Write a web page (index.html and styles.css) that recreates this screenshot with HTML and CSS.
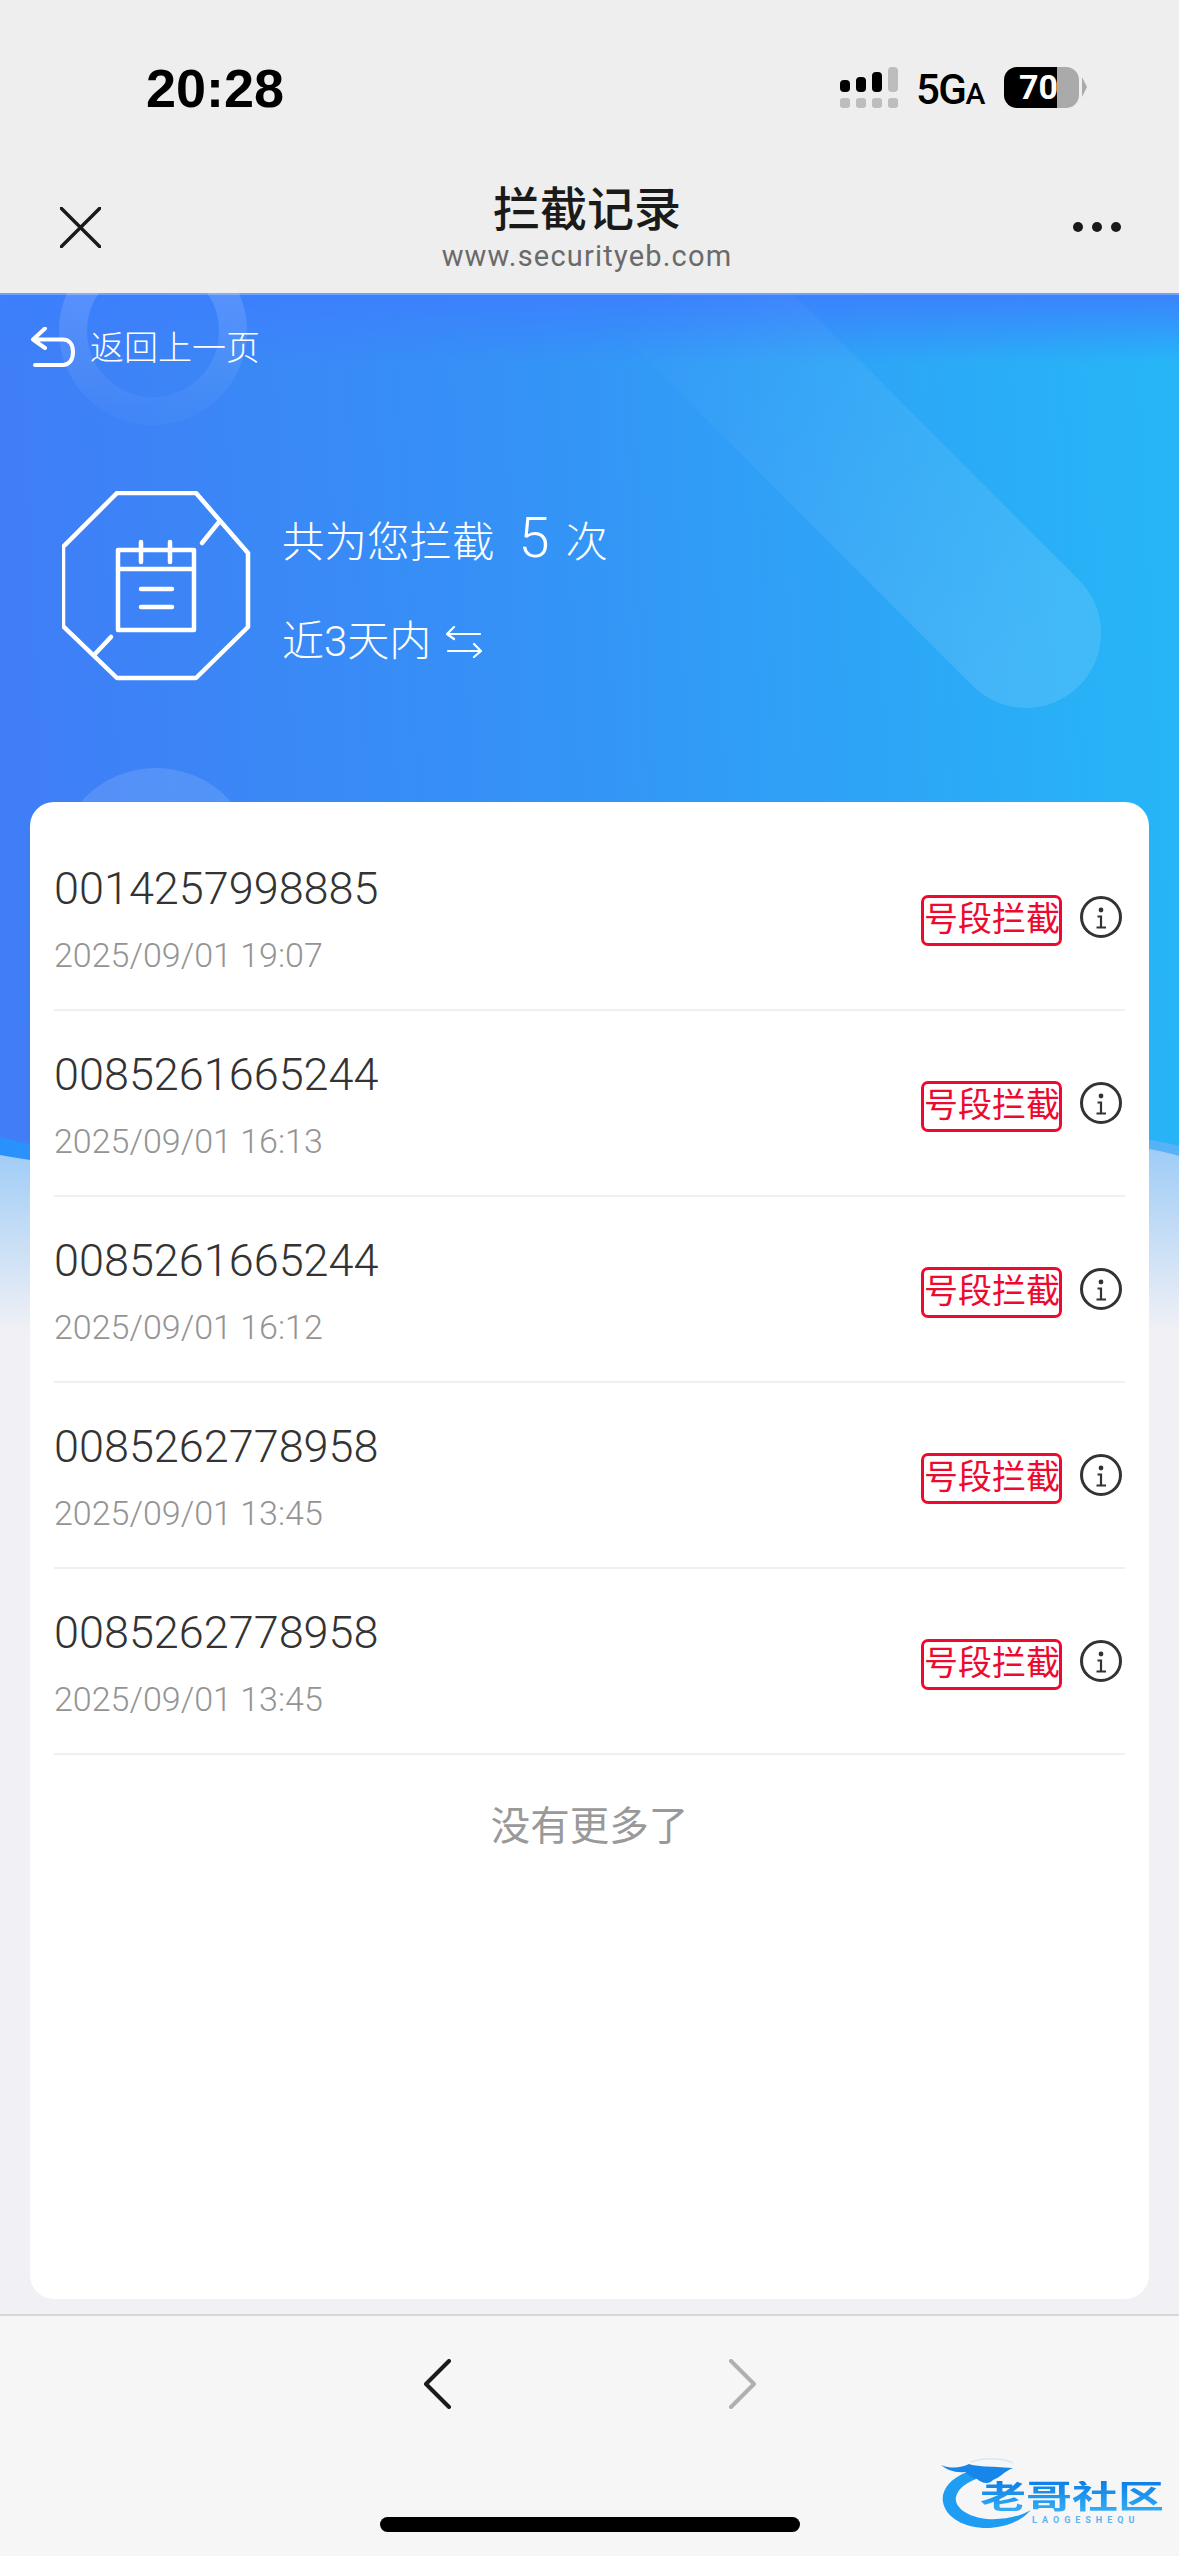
FILE: index.html
```html
<!DOCTYPE html>
<html lang="zh-CN">
<head>
<meta charset="UTF-8" />
<title>拦截记录</title>
<link rel="stylesheet" href="styles.css">
</head>
<body>
<div class="phone">

	<header class="topbar">
		<div class="status">
			<span class="clock">20:28</span>
			<div class="status-right">
				<svg class="signal" width="58" height="42" viewBox="0 0 58 42">
					<rect x="0" y="13" width="10" height="12" rx="4" fill="#000"/>
					<rect x="16" y="10" width="10" height="15" rx="4" fill="#000"/>
					<rect x="32" y="5" width="10" height="20" rx="4" fill="#000"/>
					<rect x="48" y="0" width="10" height="25" rx="4" fill="#bdbdbd"/>
					<rect x="0" y="31" width="10" height="10" rx="3" fill="#bdbdbd"/>
					<rect x="16" y="31" width="10" height="10" rx="3" fill="#bdbdbd"/>
					<rect x="32" y="31" width="10" height="10" rx="3" fill="#bdbdbd"/>
					<rect x="48" y="31" width="10" height="10" rx="3" fill="#bdbdbd"/>
				</svg>
				<span class="net">5G<small>A</small></span>
				<div class="battery"><span class="battery-num">70</span></div>
				<span class="battery-cap"></span>
			</div>
		</div>
		<nav class="nav">
			<svg class="nav-close" width="41" height="41" viewBox="0 0 41 41">
				<path d="M1 1L40 40M40 1L1 40" stroke="#1a1a1a" stroke-width="3.4" fill="none" stroke-linecap="round"/>
			</svg>
			<div class="nav-title">
				<div class="title">拦截记录</div>
				<div class="url">www.securityeb.com</div>
			</div>
			<svg class="nav-more" width="50" height="10" viewBox="0 0 50 10">
				<circle cx="5" cy="5" r="5" fill="#1a1a1a"/>
				<circle cx="24" cy="5" r="5" fill="#1a1a1a"/>
				<circle cx="43" cy="5" r="5" fill="#1a1a1a"/>
			</svg>
		</nav>
	</header>

	<main class="main">
		<!-- Hintergrund -->
		<svg class="backdrop" width="1179" height="1100" viewBox="0 293 1179 1100">
			<defs>
				<linearGradient id="bgBlue" gradientUnits="userSpaceOnUse" x1="0" y1="700" x2="1179" y2="640">
					<stop offset="0" stop-color="#407df7"/>
					<stop offset="0.45" stop-color="#3592f6"/>
					<stop offset="1" stop-color="#26b6f7"/>
				</linearGradient>
				<linearGradient id="bgBand" gradientUnits="userSpaceOnUse" x1="0" y1="0" x2="1179" y2="0">
					<stop offset="0" stop-color="#2a90fb"/>
					<stop offset="1" stop-color="#58b2f6"/>
				</linearGradient>
				<linearGradient id="bgFade" x1="0" y1="0" x2="0" y2="1">
					<stop offset="0" stop-color="#93c7f7"/>
					<stop offset="1" stop-color="#f0f0f5"/>
				</linearGradient>
				<linearGradient id="bgTop" x1="0" y1="0" x2="0" y2="1">
					<stop offset="0" stop-color="#3c7ffd" stop-opacity="0.95"/>
					<stop offset="1" stop-color="#3c7ffd" stop-opacity="0"/>
				</linearGradient>
				<linearGradient id="pillFade" gradientUnits="userSpaceOnUse" x1="1030" y1="637" x2="640" y2="300">
					<stop offset="0" stop-color="#fff" stop-opacity="0.12"/>
					<stop offset="1" stop-color="#fff" stop-opacity="0"/>
				</linearGradient>
				<linearGradient id="ringFade" x1="0" y1="0" x2="0" y2="1">
					<stop offset="0" stop-color="#fff" stop-opacity="0.18"/>
					<stop offset="1" stop-color="#fff" stop-opacity="0.03"/>
				</linearGradient>
			</defs>
			<rect x="0" y="1125" width="1179" height="205" fill="url(#bgFade)"/>
			<path d="M0 293H1179V1156C1100 1130 800 1120 500 1150C300 1170 100 1175 0 1155Z" fill="url(#bgBand)"/>
			<path d="M0 293H1179V1146C1100 1125 800 1110 500 1140C300 1160 100 1165 0 1137Z" fill="url(#bgBlue)"/>
			<rect x="0" y="293" width="1179" height="70" fill="url(#bgTop)"/>
			<rect x="0" y="293" width="1179" height="2" fill="#6ea3fa"/>
			<circle cx="153" cy="331" r="80" fill="none" stroke="url(#ringFade)" stroke-width="28"/>
			<circle cx="156" cy="868" r="100" fill="#fff" fill-opacity="0.12"/>
			<path d="M1026 633L640 247" stroke="url(#pillFade)" stroke-width="150" stroke-linecap="round" fill="none"/>
		</svg>

		<div class="back-link">
			<svg width="44" height="40" viewBox="0 0 44 40">
				<path d="M14 1.5L2 12.5L14 21M3 12.5H32C38 12.5 42 17 42 25C42 33 38 38 32 38H4" stroke="#fff" stroke-width="4" fill="none" stroke-linecap="round" stroke-linejoin="round"/>
			</svg>
			<span class="back-label">返回上一页</span>
		</div>

		<section class="summary">
			<svg class="summary-icon" width="190" height="190" viewBox="62 491 190 190">
				<g stroke="#fff" stroke-width="4.5" fill="none" stroke-linecap="round" stroke-linejoin="round">
					<path d="M117 493H196L248 553V627L196 678H117L63 626V547Z"/>
					<path d="M219 522L202 543M111 637L94 655"/>
					<rect x="118" y="550" width="76" height="80"/>
					<path d="M118 569H194M141 542V562M170 542V562M141 589H172M141 607H172"/>
				</g>
			</svg>
			<div class="summary-text">
				<div class="summary-count">共为您拦截<span class="count-num">5</span>次</div>
				<div class="summary-range">
					<span>近3天内</span>
					<svg width="36" height="32" viewBox="0 0 36 32">
						<path d="M8 1L1 8L8 13M1 8H34M28 18L35 25L28 31M35 25H2" stroke="#fff" stroke-width="2.2" fill="none" stroke-linecap="round" stroke-linejoin="round"/>
					</svg>
				</div>
			</div>
		</section>

		<section class="card">
			<div class="row">
				<div class="row-info">
					<div class="row-number">0014257998885</div>
					<div class="row-date">2025/09/01 19:07</div>
				</div>
				<span class="badge">号段拦截</span>
				<svg class="info" width="42" height="42" viewBox="0 0 42 42">
					<circle cx="21" cy="21" r="19.5" fill="none" stroke="#333" stroke-width="3"/>
					<circle cx="21" cy="14" r="2.4" fill="#333"/>
					<path d="M17.5 20.5H21V31M16.5 31.5H26" fill="none" stroke="#333" stroke-width="2.2"/>
				</svg>
			</div>
			<div class="row">
				<div class="row-info">
					<div class="row-number">0085261665244</div>
					<div class="row-date">2025/09/01 16:13</div>
				</div>
				<span class="badge">号段拦截</span>
				<svg class="info" width="42" height="42" viewBox="0 0 42 42">
					<circle cx="21" cy="21" r="19.5" fill="none" stroke="#333" stroke-width="3"/>
					<circle cx="21" cy="14" r="2.4" fill="#333"/>
					<path d="M17.5 20.5H21V31M16.5 31.5H26" fill="none" stroke="#333" stroke-width="2.2"/>
				</svg>
			</div>
			<div class="row">
				<div class="row-info">
					<div class="row-number">0085261665244</div>
					<div class="row-date">2025/09/01 16:12</div>
				</div>
				<span class="badge">号段拦截</span>
				<svg class="info" width="42" height="42" viewBox="0 0 42 42">
					<circle cx="21" cy="21" r="19.5" fill="none" stroke="#333" stroke-width="3"/>
					<circle cx="21" cy="14" r="2.4" fill="#333"/>
					<path d="M17.5 20.5H21V31M16.5 31.5H26" fill="none" stroke="#333" stroke-width="2.2"/>
				</svg>
			</div>
			<div class="row">
				<div class="row-info">
					<div class="row-number">0085262778958</div>
					<div class="row-date">2025/09/01 13:45</div>
				</div>
				<span class="badge">号段拦截</span>
				<svg class="info" width="42" height="42" viewBox="0 0 42 42">
					<circle cx="21" cy="21" r="19.5" fill="none" stroke="#333" stroke-width="3"/>
					<circle cx="21" cy="14" r="2.4" fill="#333"/>
					<path d="M17.5 20.5H21V31M16.5 31.5H26" fill="none" stroke="#333" stroke-width="2.2"/>
				</svg>
			</div>
			<div class="row">
				<div class="row-info">
					<div class="row-number">0085262778958</div>
					<div class="row-date">2025/09/01 13:45</div>
				</div>
				<span class="badge">号段拦截</span>
				<svg class="info" width="42" height="42" viewBox="0 0 42 42">
					<circle cx="21" cy="21" r="19.5" fill="none" stroke="#333" stroke-width="3"/>
					<circle cx="21" cy="14" r="2.4" fill="#333"/>
					<path d="M17.5 20.5H21V31M16.5 31.5H26" fill="none" stroke="#333" stroke-width="2.2"/>
				</svg>
			</div>
			<div class="no-more">没有更多了</div>
		</section>
	</main>

	<footer class="toolbar">
		<div class="toolbar-buttons">
			<svg width="30" height="50" viewBox="0 0 30 50">
				<path d="M26 2L3 25L26 48" stroke="#1a1a1a" stroke-width="4" fill="none" stroke-linecap="round" stroke-linejoin="round"/>
			</svg>
			<svg width="30" height="50" viewBox="0 0 30 50">
				<path d="M4 2L27 25L4 48" stroke="#b0b0b0" stroke-width="4" fill="none" stroke-linecap="round" stroke-linejoin="round"/>
			</svg>
		</div>
		<div class="home-bar"></div>
		<div class="logo">
			<svg class="logo-dragon" width="100" height="72" viewBox="0 0 100 72">
				<path d="M26 15C8 22 0 34 2 45C5 62 26 72 49 71C66 70 80 64 90 53C78 60 62 63 46 62C26 60 13 50 15 40C17 31 26 25 40 20C36 16 30 14 26 15Z" fill="#1f9df2"/>
				<path d="M0 8C10 12 20 11 28 7C36 10 48 9 72 11C62 15 60 20 52 23C48 28 40 26 36 22C30 20 28 18 24 15C14 16 6 13 0 8Z" fill="#1686ea"/>
				<path d="M30 5C44 0 62 1 72 6" stroke="#d5e8f8" stroke-width="1.5" fill="none"/>
			</svg>
			<div class="logo-name">老哥社区</div>
			<div class="logo-sub">LAOGESHEQU</div>
		</div>
	</footer>

</div>
</body>
</html>
```
FILE: styles.css
```css
* {
	box-sizing: border-box;
}
body {
	margin: 0;
	font-family: Roboto, "Noto Sans CJK SC", sans-serif;
}
.phone {
	width: 1179px;
	height: 2556px;
	display: flex;
	flex-direction: column;
	overflow: hidden;
	background: #f0f0f5;
}

/* Statusleiste + Titel */
.topbar {
	height: 293px;
	flex: none;
	background: #eeeeee;
}
.status {
	height: 176px;
	display: flex;
	justify-content: space-between;
	padding: 57px 0 0 146px;
}
.clock {
	font-family: "Liberation Sans", sans-serif;
	font-weight: 700;
	font-size: 54px;
	line-height: 62px;
	color: #000;
}
.status-right {
	display: flex;
	align-items: flex-start;
	padding: 10px 92px 0 0;
}
.signal {
	margin-right: 18px;
}
.net {
	width: 70px;
	margin: 2px 18px 0 0;
	font-size: 42px;
	font-weight: 500;
	line-height: 42px;
	letter-spacing: -1.5px;
	color: #000;
	white-space: nowrap;
}
.net small {
	font-size: 30px;
	font-weight: 500;
	letter-spacing: 0;
}
.battery {
	width: 75px;
	height: 41px;
	border-radius: 13px;
	background: linear-gradient(to right, #000 53px, #aaa 53px);
	color: #fff;
	font-weight: 700;
	font-size: 34px;
	line-height: 41px;
	padding-left: 15px;
}
.battery-cap {
	width: 0;
	height: 0;
	margin: 10px 0 0 3px;
	border-left: 5px solid #aaa;
	border-top: 10px solid transparent;
	border-bottom: 10px solid transparent;
}
.nav {
	display: flex;
	justify-content: space-between;
	align-items: flex-start;
	padding: 0 56px 0 60px;
}
.nav-close {
	margin-top: 31px;
}
.nav-more {
	margin-top: 46px;
}
.nav-title {
	text-align: center;
	padding-top: 5px;
}
.title {
	font-size: 47px;
	line-height: 58px;
	font-weight: 500;
	color: #1a1a1a;
}
.url {
	font-size: 29px;
	line-height: 34px;
	letter-spacing: 1.2px;
	color: #6a6a6a;
}

/* Hauptbereich */
.main {
	position: relative;
	height: 2021px;
	flex: none;
}
.backdrop {
	position: absolute;
	left: 0;
	top: 0;
}
.back-link {
	position: relative;
	display: flex;
	align-items: center;
	gap: 15px;
	height: 40px;
	margin-top: 34px;
	padding-left: 31px;
	color: #fff;
	font-size: 34px;
	font-weight: 300;
}
.back-label {
	padding-bottom: 4px;
}
.summary {
	position: relative;
	display: flex;
	align-items: center;
	gap: 30px;
	height: 190px;
	margin-top: 124px;
	padding-left: 62px;
	color: #fff;
	font-weight: 300;
}
.summary-text {
	display: flex;
	flex-direction: column;
	gap: 45px;
	padding-top: 5px;
}
.summary-count {
	font-size: 42.5px;
	line-height: 56px;
}
.count-num {
	font-size: 56px;
	margin: 0 16px 0 24px;
}
.summary-range {
	display: flex;
	align-items: center;
	gap: 15px;
	font-size: 42px;
	line-height: 52px;
}
.card {
	position: relative;
	height: 1497px;
	margin: 121px 30px 0;
	padding: 23px 24px 0;
	border-radius: 24px;
	background: #fff;
}
.row {
	display: flex;
	align-items: center;
	height: 186px;
	border-bottom: 2px solid #efeff4;
}
.row-info {
	flex: 1;
	padding-top: 5px;
}
.row-number {
	font-size: 45px;
	font-weight: 300;
	line-height: 60px;
	color: #333;
}
.row-date {
	margin-top: 11px;
	font-size: 34px;
	font-weight: 300;
	line-height: 50px;
	color: #949494;
}
.badge {
	width: 141px;
	height: 51px;
	margin-top: 7px;
	border: 3px solid #ee0a2e;
	border-radius: 7px;
	color: #ee0a2e;
	font-size: 34px;
	line-height: 43px;
	text-align: center;
	white-space: nowrap;
}
.info {
	margin: 0 3px 0 18px;
}
.no-more {
	margin-top: 46px;
	text-align: center;
	font-size: 39.5px;
	line-height: 52px;
	color: #999;
}

/* Werkzeugleiste unten */
.toolbar {
	position: relative;
	flex: 1;
	border-top: 2px solid #d8d8dc;
	background: #f6f6f7;
}
.toolbar-buttons {
	display: flex;
	justify-content: center;
	gap: 274px;
	padding-top: 43px;
}
.home-bar {
	width: 420px;
	height: 15px;
	margin: 108px 0 0 380px;
	border-radius: 8px;
	background: #000;
}
.logo {
	position: absolute;
	left: 941px;
	top: 141px;
	width: 224px;
	height: 72px;
}
.logo-dragon {
	position: absolute;
	left: 0;
	top: 0;
}
.logo-name {
	position: absolute;
	left: 39px;
	top: 24px;
	font-size: 46px;
	line-height: 46px;
	font-weight: 700;
	white-space: nowrap;
	background: linear-gradient(#0b7fe6, #35adf6);
	-webkit-background-clip: text;
	background-clip: text;
	color: transparent;
	transform: scaleY(0.68);
	transform-origin: top left;
}
.logo-sub {
	position: absolute;
	left: 91px;
	top: 58px;
	font-size: 9px;
	line-height: 10px;
	font-weight: 700;
	letter-spacing: 5px;
	color: #5db3f0;
	white-space: nowrap;
}
```
